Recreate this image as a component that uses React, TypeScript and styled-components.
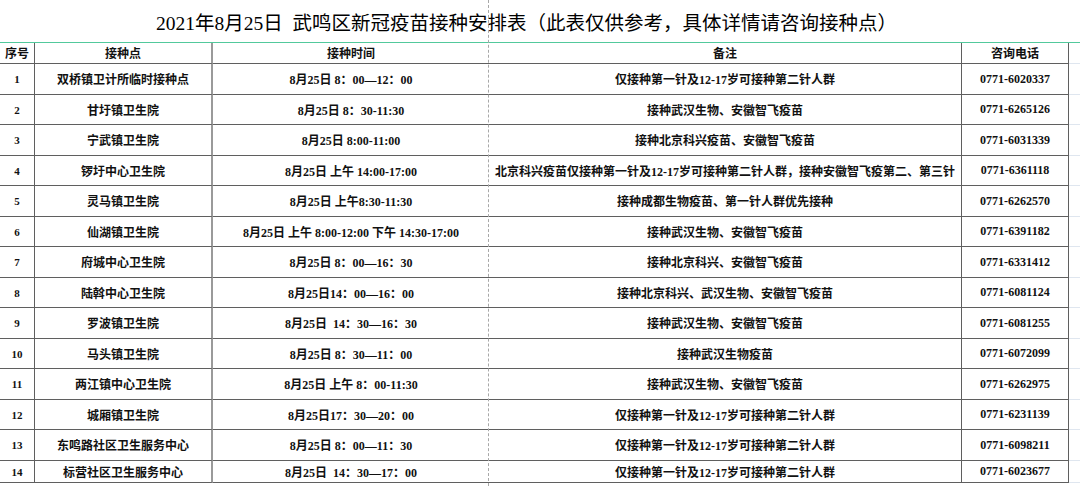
import React from "react";
import styled, { createGlobalStyle } from "styled-components";

interface Site {
  no: number;
  name: string;
  time: string;
  note: string;
  phone: string;
}

const SITES: Site[] = [
  { no: 1, name: "双桥镇卫计所临时接种点", time: "8月25日 8：00—12：00", note: "仅接种第一针及12-17岁可接种第二针人群", phone: "0771-6020337" },
  { no: 2, name: "甘圩镇卫生院", time: "8月25日 8：30-11:30", note: "接种武汉生物、安徽智飞疫苗", phone: "0771-6265126" },
  { no: 3, name: "宁武镇卫生院", time: "8月25日 8:00-11:00", note: "接种北京科兴疫苗、安徽智飞疫苗", phone: "0771-6031339" },
  { no: 4, name: "锣圩中心卫生院", time: "8月25日 上午 14:00-17:00", note: "北京科兴疫苗仅接种第一针及12-17岁可接种第二针人群，接种安徽智飞疫第二、第三针", phone: "0771-6361118" },
  { no: 5, name: "灵马镇卫生院", time: "8月25日 上午8:30-11:30", note: "接种成都生物疫苗、第一针人群优先接种", phone: "0771-6262570" },
  { no: 6, name: "仙湖镇卫生院", time: "8月25日 上午 8:00-12:00 下午 14:30-17:00", note: "接种武汉生物、安徽智飞疫苗", phone: "0771-6391182" },
  { no: 7, name: "府城中心卫生院", time: "8月25日 8：00—16：30", note: "接种北京科兴、安徽智飞疫苗", phone: "0771-6331412" },
  { no: 8, name: "陆斡中心卫生院", time: "8月25日14：00—16：00", note: "接种北京科兴、武汉生物、安徽智飞疫苗", phone: "0771-6081124" },
  { no: 9, name: "罗波镇卫生院", time: "8月25日  14：30—16：30", note: "接种武汉生物、安徽智飞疫苗", phone: "0771-6081255" },
  { no: 10, name: "马头镇卫生院", time: "8月25日 8：30—11：00", note: "接种武汉生物疫苗", phone: "0771-6072099" },
  { no: 11, name: "两江镇中心卫生院", time: "8月25日 上午 8：00-11:30", note: "接种武汉生物、安徽智飞疫苗", phone: "0771-6262975" },
  { no: 12, name: "城厢镇卫生院", time: "8月25日17：30—20：00", note: "仅接种第一针及12-17岁可接种第二针人群", phone: "0771-6231139" },
  { no: 13, name: "东鸣路社区卫生服务中心", time: "8月25日 8：00—11：30", note: "仅接种第一针及12-17岁可接种第二针人群", phone: "0771-6098211" },
  { no: 14, name: "标营社区卫生服务中心", time: "8月25日  14：30—17：00", note: "仅接种第一针及12-17岁可接种第二针人群", phone: "0771-6023677" },
];

const GlobalStyle = createGlobalStyle`
  html, body {
    margin: 0;
    padding: 0;
    background: #fff;
  }
  body {
    width: 1080px;
    height: 486px;
    overflow: hidden;
    font-family: "Liberation Serif", "Noto Sans CJK SC", serif;
    color: #111;
  }
`;

// --- Styles ---

const Sheet = styled.div`
  position: relative;
  width: 1080px;
  height: 486px;
`;

const Title = styled.h1`
  margin: 0;
  width: 1069px;
  height: 42px;
  box-sizing: border-box;
  padding-right: 16px;
  display: flex;
  align-items: center;
  justify-content: center;
  font-family: "Liberation Serif", "Noto Sans CJK SC", serif;
  font-size: 19.5px;
  font-weight: 400;
  color: #000;
  white-space: pre;
`;

// 가로 한 줄 : 열 너비는 엑셀 열 그대로
const Row = styled.div<{ $h: number; $head?: boolean }>`
  display: grid;
  grid-template-columns: 35px 178px 276px 473px 107px 11px;
  height: ${({ $h }) => $h}px;
  box-sizing: border-box;
  border-top: ${({ $head }) => ($head ? "1px solid #52c99c" : "none")};
`;

const Cell = styled.div<{ $line?: string; $size?: number }>`
  display: flex;
  align-items: center;
  justify-content: center;
  box-sizing: border-box;
  border-bottom: 1px solid #5f5f5f;
  border-right: ${({ $line }) => $line ?? "1px solid #5f5f5f"};
  font-size: ${({ $size }) => $size ?? 12}px;
  font-weight: 600;
  white-space: pre;
  overflow: hidden;
`;

const HeadCell = styled(Cell)`
  font-weight: 700;
  font-size: 12px;
`;

const Spare = styled.div`
  box-sizing: border-box;
  border-bottom: 1px solid #dfe6ef;
`;

const PageBreak = styled.div`
  position: absolute;
  top: 0;
  bottom: 0;
  left: 488px;
  border-left: 1px dashed #a8a8a8;
  pointer-events: none;
`;

const COL_LINES = [
  "1px solid #5f5f5f",
  "2px solid #9a9a9a",
  "none",
  "1px solid #5f5f5f",
  "1px solid #5f5f5f",
];

// 행 경계 : 64 + 30.5 * n
const rowHeight = (i: number) => {
  if (i === SITES.length - 1) return 22;
  const top = Math.round(64 + 30.5 * i);
  const bottom = Math.round(64 + 30.5 * (i + 1));
  return bottom - top;
};

// --- Component ---

const App: React.FC = () => {
  return (
    <>
      <GlobalStyle />
      <Sheet>
        <Title>2021年8月25日  武鸣区新冠疫苗接种安排表（此表仅供参考，具体详情请咨询接种点）</Title>

        <Row $h={22} $head>
          <HeadCell $line={COL_LINES[0]}>序号</HeadCell>
          <HeadCell $line={COL_LINES[1]}>接种点</HeadCell>
          <HeadCell $line={COL_LINES[2]}>接种时间</HeadCell>
          <HeadCell $line={COL_LINES[3]}>备注</HeadCell>
          <HeadCell $line={COL_LINES[4]}>咨询电话</HeadCell>
          <Spare />
        </Row>

        {SITES.map((s, i) => (
          <Row key={s.no} $h={rowHeight(i)}>
            <Cell $line={COL_LINES[0]} $size={11}>{s.no}</Cell>
            <Cell $line={COL_LINES[1]}>{s.name}</Cell>
            <Cell $line={COL_LINES[2]}>{s.time}</Cell>
            <Cell $line={COL_LINES[3]}>{s.note}</Cell>
            <Cell $line={COL_LINES[4]}>{s.phone}</Cell>
            <Spare />
          </Row>
        ))}

        <PageBreak />
      </Sheet>
    </>
  );
};

export default App;
